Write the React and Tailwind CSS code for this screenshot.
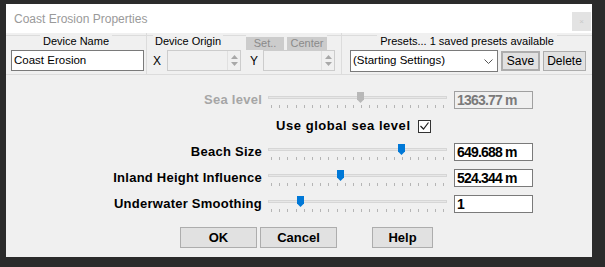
const sans = { fontFamily: '"Liberation Sans", Arial, sans-serif' };

const sliders = [
  { label: 'Beach Size', value: '649.688 m', pos: 133 },
  { label: 'Inland Height Influence', value: '524.344 m', pos: 72 },
  { label: 'Underwater Smoothing', value: '1', pos: 32 },
];

const Thumb = ({ color }) => (
  <svg width="7" height="11" viewBox="0 0 7 11">
    <polygon points="0,0 7,0 7,7.5 3.5,11 0,7.5" fill={color} />
  </svg>
);

const Slider = ({ pos, disabled }) => (
  <div className="w-[179px] h-[22px] flex flex-col">
    <div className="relative h-[15px]">
      <div className="mt-[7px] h-[3px] border border-[#d6d6d6] bg-[#e7e7e7]" />
      <div className="absolute top-[3px]" style={{ left: pos - 3 }}>
        <Thumb color={disabled ? '#b8b8b8' : '#0078d7'} />
      </div>
    </div>
    <div className="flex justify-between px-[3px] mt-[1px]">
      {Array.from({ length: 22 }).map((_, i) => (
        <div key={i} className="w-px h-[3px] bg-[#b5b5b5]" />
      ))}
    </div>
  </div>
);

const Line = ({ className = '' }) => <div className={`h-px bg-[#dcdcdc] mt-[2px] ${className}`} />;

const Spin = ({ width }) => (
  <div className={`${width} h-[21px] border border-[#cccccc] bg-[#f0f0f0] flex justify-end`}>
    <div className="w-[13px] flex flex-col items-center justify-center gap-[3px] border-l border-[#e0e0e0]">
      <svg width="7" height="4" viewBox="0 0 7 4"><polygon points="0,4 3.5,0 7,4" fill="#a8a8a8" /></svg>
      <svg width="7" height="4" viewBox="0 0 7 4"><polygon points="0,0 3.5,4 7,0" fill="#a8a8a8" /></svg>
    </div>
  </div>
);

export default function App() {
  return (
    <div className="w-[605px] h-[267px] bg-[#2b2b2b] pt-[4px] pl-[6px]" style={sans}>
      <div className="w-[586px] h-[253px] flex flex-col bg-[#f0f0f0]">
        {/* Title bar */}
        <div className="h-[29px] bg-white flex items-center justify-between pl-[8px]">
          <span className="text-[12px] text-[#9a9a9a]">Coast Erosion Properties</span>
          <div className="self-end mb-[2px] mr-[1px] w-[19px] h-[19px] bg-[#e3e3e3] flex items-center justify-center">
            <span className="text-[8px] text-[#c8c8c8]">×</span>
          </div>
        </div>

        {/* Top groups */}
        <div className="h-[42px] flex border-b border-[#dcdcdc] text-[11px] text-black">
          <div className="w-[141px] border-r border-[#dcdcdc] flex flex-col">
            <div className="h-[17px] flex items-start">
              <Line className="flex-1" />
              <span className="px-[3px] leading-[17px]">Device Name</span>
              <Line className="flex-1" />
            </div>
            <div className="ml-[5px] w-[133px] h-[21px] border border-[#7a7a7a] bg-white flex items-center pl-[2px] text-[11.5px]">
              Coast Erosion
            </div>
          </div>

          <div className="w-[195px] border-r border-[#dcdcdc] flex flex-col">
            <div className="h-[17px] flex items-start">
              <Line className="w-[6px]" />
              <span className="px-[2px] leading-[17px]">Device Origin</span>
              <Line className="flex-1" />
              <div className="mt-[4px] w-[38px] h-[13px] bg-[#cccccc] text-[#8a8a8a] flex items-center justify-center">Set..</div>
              <div className="mt-[4px] ml-[3px] w-[40px] h-[13px] bg-[#cccccc] text-[#8a8a8a] flex items-center justify-center">Center</div>
              <Line className="w-[14px]" />
            </div>
            <div className="flex items-center">
              <span className="ml-[6px] w-[14px] text-[12px]">X</span>
              <Spin width="w-[74px]" />
              <span className="ml-[9px] w-[13px] text-[12px]">Y</span>
              <Spin width="w-[72px]" />
            </div>
          </div>

          <div className="flex-1 flex flex-col">
            <div className="h-[17px] flex items-start">
              <Line className="flex-1" />
              <span className="px-[3px] leading-[17px]">Presets... 1 saved presets available</span>
              <Line className="flex-1" />
            </div>
            <div className="flex items-center">
              <div className="ml-[8px] w-[148px] h-[22px] border border-[#7a7a7a] bg-white flex items-center justify-between pl-[2px] pr-[4px] text-[11.5px]">
                <span>(Starting Settings)</span>
                <svg width="9" height="5" viewBox="0 0 9 5"><polyline points="0.5,0.5 4.5,4.5 8.5,0.5" fill="none" stroke="#555" strokeWidth="1" /></svg>
              </div>
              <div className="ml-[3px] w-[39px] h-[20px] border-2 border-[#adadad] bg-[#e1e1e1] flex items-center justify-center text-[12px]">Save</div>
              <div className="ml-[3px] w-[43px] h-[20px] border border-[#adadad] bg-[#e1e1e1] flex items-center justify-center text-[12px]">Delete</div>
            </div>
          </div>
        </div>

        {/* Sliders */}
        <div className="flex flex-col pt-[12px] text-[13px] font-bold">
          <div className="h-[26px] flex items-center">
            <div className="w-[256px] text-right text-[#a6a6a6] tracking-[0.25px]">Sea level</div>
            <div className="ml-[6px]"><Slider pos={92} disabled /></div>
            <div className="ml-[7px] w-[79px] h-[18px] border border-[#a0a0a0] bg-[#f0f0f0] text-[#7a7a7a] pl-[2px] flex items-center text-[14px] tracking-[-0.8px]">1363.77 m</div>
          </div>

          <div className="h-[26px] flex items-center">
            <span className="ml-[270px] w-[142px] tracking-[0.55px]">Use global sea level</span>
            <div className="w-[13px] h-[13px] border border-[#333] bg-white flex items-center justify-center">
              <svg width="9" height="8" viewBox="0 0 9 8"><polyline points="0.5,4 3.5,7 8.5,0.5" fill="none" stroke="#222" strokeWidth="1.2" /></svg>
            </div>
          </div>

          {sliders.map((s) => (
            <div key={s.label} className="h-[26px] flex items-center">
              <div className="w-[256px] text-right text-black tracking-[0.25px]">{s.label}</div>
              <div className="ml-[6px]"><Slider pos={s.pos} /></div>
              <div className="ml-[7px] w-[79px] h-[18px] border border-[#7a7a7a] bg-white text-black pl-[2px] flex items-center text-[14px] tracking-[-0.8px]">{s.value}</div>
            </div>
          ))}
        </div>

        {/* Buttons */}
        <div className="mt-[10px] flex text-[13px] font-bold">
          <div className="ml-[174px] w-[77px] h-[21px] border border-[#adadad] bg-[#e1e1e1] flex items-center justify-center">OK</div>
          <div className="ml-[3px] w-[77px] h-[21px] border border-[#adadad] bg-[#e1e1e1] flex items-center justify-center">Cancel</div>
          <div className="ml-[35px] w-[61px] h-[21px] border border-[#adadad] bg-[#e1e1e1] flex items-center justify-center">Help</div>
        </div>
      </div>
    </div>
  );
}
